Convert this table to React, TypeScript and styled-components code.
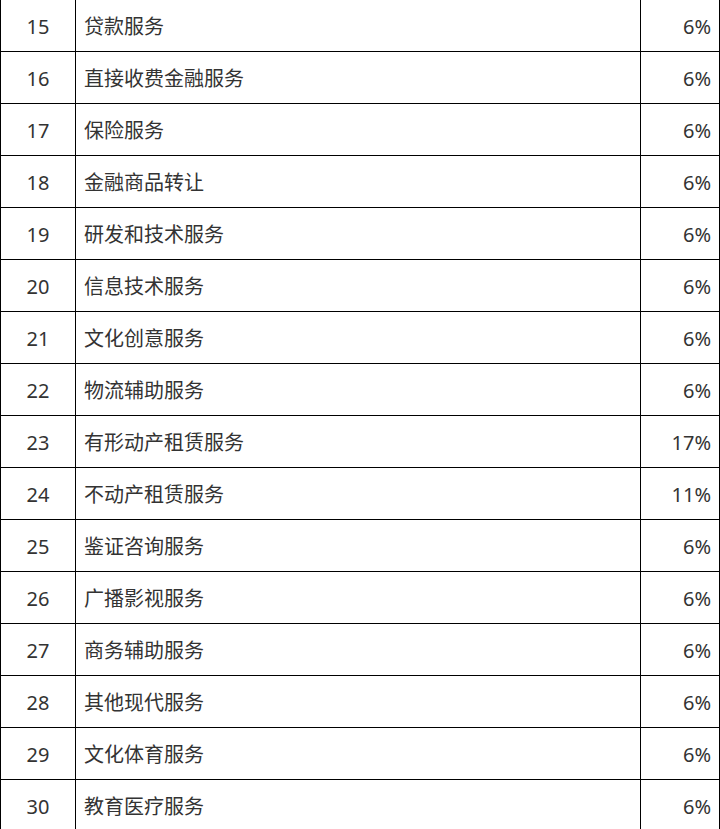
import styled, { createGlobalStyle } from 'styled-components'

const GlobalStyle = createGlobalStyle`
  html, body {
    margin: 0;
    padding: 0;
    background: #ffffff;
    overflow: hidden;
  }
`

const rows: [number, string, string][] = [
  [15, '贷款服务', '6%'],
  [16, '直接收费金融服务', '6%'],
  [17, '保险服务', '6%'],
  [18, '金融商品转让', '6%'],
  [19, '研发和技术服务', '6%'],
  [20, '信息技术服务', '6%'],
  [21, '文化创意服务', '6%'],
  [22, '物流辅助服务', '6%'],
  [23, '有形动产租赁服务', '17%'],
  [24, '不动产租赁服务', '11%'],
  [25, '鉴证咨询服务', '6%'],
  [26, '广播影视服务', '6%'],
  [27, '商务辅助服务', '6%'],
  [28, '其他现代服务', '6%'],
  [29, '文化体育服务', '6%'],
  [30, '教育医疗服务', '6%'],
]

const App = () => {
  return (
    <>
      <GlobalStyle />
      <Table>
        <colgroup>
          <col style={{ width: 75 }} />
          <col />
          <col style={{ width: 79 }} />
        </colgroup>
        <tbody>
          {rows.map(([no, name, rate]) => (
            <Row key={no}>
              <Cell align="center">{no}</Cell>
              <Cell align="left">{name}</Cell>
              <Cell align="right">{rate}</Cell>
            </Row>
          ))}
        </tbody>
      </Table>
    </>
  )
}

export default App

const Table = styled.table`
  width: 720px;
  margin-top: -1px;
  border-collapse: collapse;
  table-layout: fixed;
  font-family: 'Noto Sans', 'Noto Sans CJK SC', sans-serif;
  font-size: 20px;
  color: #333333;
`

const Row = styled.tr`
  height: 52px;
`

const Cell = styled.td<{ align: 'left' | 'center' | 'right' }>`
  border: 1px solid #000000;
  padding: 2px 8px 0;
  text-align: ${(p) => p.align};
  vertical-align: middle;
  white-space: nowrap;
  line-height: 1;
`
